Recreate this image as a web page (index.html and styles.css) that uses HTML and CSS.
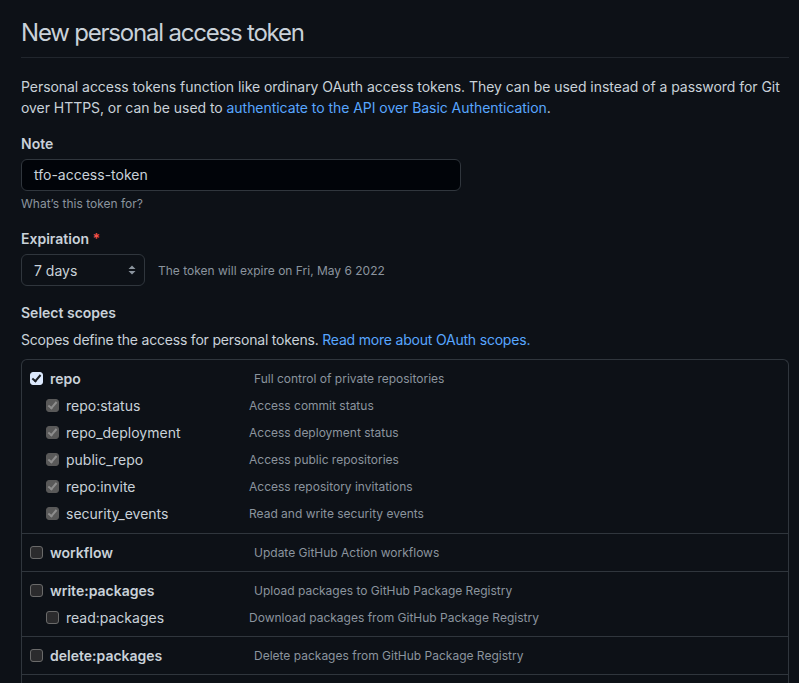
FILE: index.html
```html
<!DOCTYPE html>
<html lang="en">
<head>
<meta charset="utf-8">
<title>New personal access token</title>
<link rel="stylesheet" href="styles.css">
</head>
<body>
<main class="page">
  <div class="subhead">
    <h2 class="subhead-heading">New personal access token</h2>
  </div>
  <p class="intro">Personal access tokens function like ordinary OAuth access tokens. They can be used instead of a password for Git over HTTPS, or can be used to <a href="#">authenticate to the API over Basic Authentication</a>.</p>

  <div class="form-group note-group">
    <label class="form-label">Note</label>
    <div class="input">tfo-access-token</div>
    <p class="note">What’s this token for?</p>
  </div>

  <div class="form-group">
    <label class="form-label">Expiration <span class="req">*</span></label>
    <div class="expire-row">
      <div class="select">
        <span>7 days</span>
        <svg class="select-arrow" width="8" height="12" viewBox="0 0 8 12"><path d="M4 1.5 L7.5 5 H0.5 Z M4 10.5 L7.5 7 H0.5 Z" fill="#8b949e"/></svg>
      </div>
      <span class="expire-note">The token will expire on Fri, May 6 2022</span>
    </div>
  </div>

  <div class="form-group scopes-group">
    <label class="form-label">Select scopes</label>
    <p class="scopes-desc">Scopes define the access for personal tokens. <a href="#">Read more about OAuth scopes.</a></p>
  </div>

  <div class="scopes">
    <div class="scope-group">
      <div class="scope-row main">
        <span class="cb checked"></span><span class="name">repo</span><span class="desc">Full control of private repositories</span>
      </div>
      <div class="scope-row sub"><span class="cb disabled"></span><span class="name">repo:status</span><span class="desc">Access commit status</span></div>
      <div class="scope-row sub"><span class="cb disabled"></span><span class="name">repo_deployment</span><span class="desc">Access deployment status</span></div>
      <div class="scope-row sub"><span class="cb disabled"></span><span class="name">public_repo</span><span class="desc">Access public repositories</span></div>
      <div class="scope-row sub"><span class="cb disabled"></span><span class="name">repo:invite</span><span class="desc">Access repository invitations</span></div>
      <div class="scope-row sub"><span class="cb disabled"></span><span class="name">security_events</span><span class="desc">Read and write security events</span></div>
    </div>
    <div class="scope-group">
      <div class="scope-row main"><span class="cb"></span><span class="name">workflow</span><span class="desc">Update GitHub Action workflows</span></div>
    </div>
    <div class="scope-group">
      <div class="scope-row main"><span class="cb"></span><span class="name">write:packages</span><span class="desc">Upload packages to GitHub Package Registry</span></div>
      <div class="scope-row sub"><span class="cb"></span><span class="name">read:packages</span><span class="desc">Download packages from GitHub Package Registry</span></div>
    </div>
    <div class="scope-group">
      <div class="scope-row main"><span class="cb"></span><span class="name">delete:packages</span><span class="desc">Delete packages from GitHub Package Registry</span></div>
    </div>
    <div class="scope-group last"></div>
  </div>
</main>
</body>
</html>
```
FILE: styles.css
```css
html, body {
  margin: 0;
  padding: 0;
  background: #0d1117;
  height: 683px;
  overflow: hidden;
}
body {
  font-family: Inter, "Liberation Sans", Arial, sans-serif;
  font-size: 14px;
  line-height: 21px;
  color: #c9d1d9;
}
a { color: #58a6ff; text-decoration: none; }

.page {
  width: 768px;
  padding: 16px 0 0 21px;
}

.subhead {
  border-bottom: 1px solid #21262d;
  padding-bottom: 8px;
  margin-bottom: 18px;
}
.subhead-heading {
  margin: 0;
  font-size: 24px;
  line-height: 33px;
  font-weight: 400;
  letter-spacing: -1.2px;
  color: #c9d1d9;
}

.intro { margin: 0 0 15px 0; letter-spacing: -0.05px; }

.form-group { margin-bottom: 16px; }
.form-group.note-group { margin-bottom: 15px; }
.form-label {
  display: block;
  font-weight: 600;
  margin-bottom: 5px;
  color: #c9d1d9;
}
.scopes-group .form-label { margin-bottom: 6px; }
.req { color: #f85149; }

.input {
  box-sizing: border-box;
  width: 440px;
  height: 32px;
  padding: 5px 12px;
  background: #010409;
  border: 1px solid #30363d;
  border-radius: 6px;
  color: #c9d1d9;
  line-height: 20px;
}
.note {
  margin: 4px 0 0;
  font-size: 12px;
  line-height: 18px;
  color: #8b949e;
}

.expire-row {
  display: flex;
  align-items: center;
  gap: 13px;
}
.select {
  box-sizing: border-box;
  width: 124px;
  height: 32px;
  display: flex;
  align-items: center;
  justify-content: space-between;
  padding: 0 8px 0 12px;
  border: 1px solid #30363d;
  border-radius: 6px;
  background: #0d1117;
  color: #c9d1d9;
}
.expire-note {
  font-size: 12px;
  color: #8b949e;
}

.scopes-desc { margin: 0; letter-spacing: -0.2px; }

.scopes {
  border: 1px solid #30363d;
  border-bottom: 0;
  border-radius: 6px 6px 0 0;
  margin-top: -7px;
}
.scope-group {
  padding: 8px 8px;
  border-bottom: 1px solid #30363d;
}
.scope-group:first-child { padding-bottom: 9px; }
.scope-group.last {
  border-bottom: 0;
  height: 40px;
}
.scope-row {
  display: flex;
  align-items: center;
  height: 21px;
}
.scope-row.sub {
  margin-top: 6px;
  padding-left: 16px;
}
.scope-row .name { margin-left: 7px; }
.scope-row.main .name {
  font-weight: 600;
  width: 204px;
}
.scope-row.sub .name { width: 183px; }
.desc { color: #8b949e; font-size: 12px; }

.cb {
  box-sizing: border-box;
  width: 13px;
  height: 13px;
  border-radius: 3px;
  border: 1px solid #6a6a6a;
  background: #2b2b2d;
  flex: none;
  position: relative;
}
.cb.checked {
  background: #dce9fd;
  border-color: #dce9fd;
}
.cb.disabled {
  background: #595959;
  border-color: #595959;
}
.cb.checked::after,
.cb.disabled::after {
  content: "";
  position: absolute;
  left: 3px;
  top: 0px;
  width: 3px;
  height: 7px;
  border: solid #1b1f24;
  border-width: 0 2px 2px 0;
  transform: rotate(40deg);
}
.cb.disabled::after { border-color: #8d8d8d; }
```
